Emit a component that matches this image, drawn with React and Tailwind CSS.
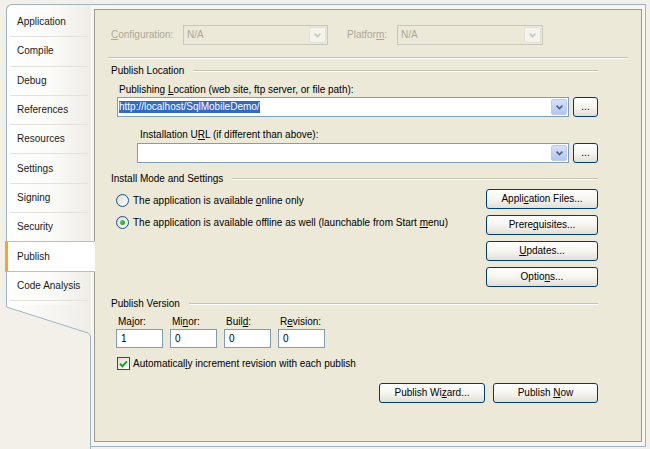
import React from "react";

const tabs = [
  "Application",
  "Compile",
  "Debug",
  "References",
  "Resources",
  "Settings",
  "Signing",
  "Security",
  "Publish",
  "Code Analysis",
];

function U({ children }) {
  return <span className="underline underline-offset-[1px]">{children}</span>;
}

function Chevron({ color = "#4d6185" }) {
  return (
    <svg width="7" height="5" viewBox="0 0 7 5">
      <path d="M0.6 0.6 L3.5 3.6 L6.4 0.6" fill="none" stroke={color} strokeWidth="1.6" />
    </svg>
  );
}

function XpButton({ className = "", children }) {
  return (
    <div
      className={`flex items-center justify-center rounded-[3px] border border-[#003c74] bg-linear-to-b from-white via-[#f6f5f0] to-[#e2dfd4] text-black ${className}`}
    >
      <span>{children}</span>
    </div>
  );
}

function DisabledCombo({ className = "" }) {
  return (
    <div className={`flex h-[20px] items-center border border-[#c9c7ba] pr-[1px] ${className}`}>
      <span className="flex-1 pl-[3px] text-[#aca899]">N/A</span>
      <div className="flex h-[16px] w-[17px] items-center justify-center rounded-[2px] border border-[#e2e0d4] bg-[#f4f3ee]">
        <Chevron color="#c9c7ba" />
      </div>
    </div>
  );
}

function Combo({ className = "", children }) {
  return (
    <div className={`flex h-[20px] items-center border border-[#7f9db9] bg-white pl-[1px] pr-[1px] ${className}`}>
      <div className="flex flex-1 items-center">{children}</div>
      <div className="flex h-[16px] w-[16px] items-center justify-center rounded-[2px] border border-[#bccbed] bg-linear-to-b from-[#d6e1fb] to-[#b2c6f4]">
        <Chevron />
      </div>
    </div>
  );
}

function Header({ className = "", children }) {
  return (
    <div className={`flex h-[12px] items-center ${className}`}>
      <span>{children}</span>
      <div className="ml-[9px] flex-1 border-t border-b border-t-[#c5c2b2] border-b-white" />
    </div>
  );
}

function Radio({ checked }) {
  return (
    <div className="flex h-[13px] w-[13px] items-center justify-center rounded-full border border-[#1c5180] bg-linear-to-br from-[#dcdbd3] to-white">
      {checked && <div className="h-[5px] w-[5px] rounded-full bg-linear-to-br from-[#5fd35f] to-[#1f9a22]" />}
    </div>
  );
}

function VersionBox({ label, value }) {
  return (
    <div className="flex w-[47px] flex-col">
      <div className="h-[12px] pl-[2px] leading-[12px]">{label}</div>
      <div className="mt-[1px] flex h-[19px] items-center border border-[#7f9db9] bg-white pl-[4px]">{value}</div>
    </div>
  );
}

export default function App() {
  return (
    <div className="flex h-[449px] w-[650px] overflow-hidden bg-[#f2f0e9] pl-[6px] pt-[4px] font-['Liberation_Sans',Arial,sans-serif] text-[10px] leading-[12px] text-black">
      {/* tab column */}
      <div className="flex w-[85px] flex-col">
        <div className="rounded-tl-[6px] border-l border-t border-[#9fb3c6] bg-linear-to-r from-white via-[#fbfbf9] to-[#eeede7] pb-[4px] pt-[3px]">
          <div className="flex h-[293px] flex-col">
            {tabs.map((t) =>
              t === "Publish" ? (
                <div
                  key={t}
                  className="relative z-10 -ml-[2px] -mr-[4px] flex flex-1 items-center border-y border-l-[3px] border-y-[#b9bec4] border-l-[#f4a52e] bg-white pl-[9px] text-[#1a1a1a]"
                >
                  {t}
                </div>
              ) : (
                <div
                  key={t}
                  className={
                    t === "Security"
                      ? "mx-[3px] flex flex-1 items-center pl-[7px] text-[#1a1a1a]"
                      : "mx-[3px] flex flex-1 items-center border-b border-[#e4e2da] pl-[7px] text-[#1a1a1a]"
                  }
                >
                  {t}
                </div>
              )
            )}
          </div>
        </div>
        <svg width="85" height="36" className="block">
          <defs>
            <linearGradient id="tabfade" x1="0" x2="1" y1="0" y2="0">
              <stop offset="0" stopColor="#ffffff" />
              <stop offset="1" stopColor="#eeede7" />
            </linearGradient>
          </defs>
          <path d="M0 0 H85 V36 H84.5 V32 Q84.5 29 82 28 L0.5 2 V0 Z" fill="url(#tabfade)" />
          <path d="M0.5 0 V2 L82 28 Q84.5 29 84.5 32 V36" fill="none" stroke="#9fb3c6" />
        </svg>
        <div className="flex-1 border-r border-[#9fb3c6]" />
      </div>

      {/* frame */}
      <div className="flex h-[443px] w-[555px] flex-col border-y border-r border-[#9fb3c6] bg-[#f7f6f1] px-[3px] py-[4px]">
        <div className="flex flex-1 flex-col border border-[#9d9c92] bg-[#ece9d8] pt-[15px]">
          {/* configuration row */}
          <div className="flex h-[20px] items-center pl-[16px]">
            <div className="w-[72px] text-[#aca899]">
              <U>C</U>onfiguration:
            </div>
            <DisabledCombo className="w-[145px]" />
            <div className="ml-[19px] w-[50px] text-[#aca899]">
              Platfor<U>m</U>:
            </div>
            <DisabledCombo className="w-[146px]" />
          </div>

          <div className="ml-[13px] mt-[12px] w-[520px] border-t border-b border-t-[#c5c2b2] border-b-white" />

          <div className="ml-[16px] flex w-[487px] flex-col">
            <Header className="mt-[6px]">Publish Location</Header>
            <div className="ml-[8px] mt-[7px]">
              Publishing <U>L</U>ocation (web site, ftp server, or file path):
            </div>
            <div className="ml-[6px] mt-[1px] flex gap-[4px]">
              <Combo className="w-[452px]">
                <span className="bg-[#316ac5] text-white">http://localhost/SqlMobileDemo/</span>
              </Combo>
              <XpButton className="h-[20px] w-[25px]">...</XpButton>
            </div>

            <div className="ml-[29px] mt-[12px]">
              Installation U<U>R</U>L (if different than above):
            </div>
            <div className="ml-[26px] mt-[2px] flex gap-[4px]">
              <Combo className="w-[432px]" />
              <XpButton className="h-[20px] w-[25px]">...</XpButton>
            </div>

            <Header className="mt-[10px]">Install Mode and Settings</Header>
            <div className="mt-[4px] flex justify-between">
              <div className="flex flex-col pl-[5px]">
                <div className="mt-[5px] flex h-[13px] items-center">
                  <Radio />
                  <span className="ml-[4px]">
                    The application is available <U>o</U>nline only
                  </span>
                </div>
                <div className="mt-[9px] flex h-[13px] items-center">
                  <Radio checked />
                  <span className="ml-[4px]">
                    The application is available offline as well (launchable from Start <U>m</U>enu)
                  </span>
                </div>
              </div>
              <div className="flex w-[112px] flex-col gap-[6px]">
                <XpButton className="h-[20px]">
                  Appli<U>c</U>ation Files...
                </XpButton>
                <XpButton className="h-[20px]">
                  Prere<U>q</U>uisites...
                </XpButton>
                <XpButton className="h-[20px]">
                  <U>U</U>pdates...
                </XpButton>
                <XpButton className="h-[20px]">
                  Optio<U>n</U>s...
                </XpButton>
              </div>
            </div>

            <Header className="mt-[11px]">Publish Version</Header>
            <div className="ml-[5px] mt-[6px] flex gap-[7px]">
              <VersionBox label={<>Ma<U>j</U>or:</>} value="1" />
              <VersionBox label={<>Mi<U>n</U>or:</>} value="0" />
              <VersionBox label={<>Buil<U>d</U>:</>} value="0" />
              <VersionBox label={<>R<U>e</U>vision:</>} value="0" />
            </div>
            <div className="ml-[6px] mt-[9px] flex h-[13px] items-center">
              <div className="flex h-[13px] w-[13px] items-center justify-center border border-[#1c5180] bg-linear-to-br from-[#dcdbd3] to-white">
                <svg width="9" height="8" viewBox="0 0 9 8">
                  <path d="M1 3.8 L3.4 6.2 L8 1.4" fill="none" stroke="#21a121" strokeWidth="2" />
                </svg>
              </div>
              <span className="ml-[3px]">
                Automatical<U>l</U>y increment revision with each publish
              </span>
            </div>

            <div className="mt-[13px] flex justify-end gap-[8px]">
              <XpButton className="h-[20px] w-[106px]">
                Publish Wi<U>z</U>ard...
              </XpButton>
              <XpButton className="h-[20px] w-[105px]">
                Publish <U>N</U>ow
              </XpButton>
            </div>
          </div>
        </div>
      </div>
    </div>
  );
}
